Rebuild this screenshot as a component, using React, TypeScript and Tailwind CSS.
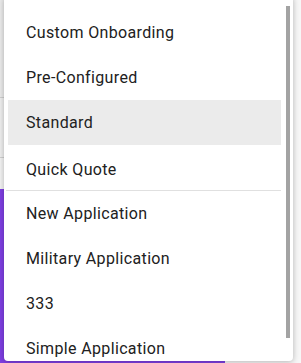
const items = [
  { label: 'Custom Onboarding' },
  { label: 'Pre-Configured' },
  { label: 'Standard', active: true },
  { label: 'Quick Quote', nudge: true },
];

const moreItems = ['New Application', 'Military Application', '333', 'Simple Application'];

function App() {
  return (
    <div className="relative h-[363px] w-[301px] overflow-hidden bg-[#f7f7f7] font-['Roboto',sans-serif]">
      {/* page behind the menu */}
      <div className="flex h-full flex-col">
        <div className="flex h-[97px]">
          <div className="w-[10px] bg-[#ececec]" />
        </div>
        <div className="flex h-[60px]">
          <div className="w-[10px] border-t border-[#d0d0d0] bg-[#f0f0f0]" />
        </div>
        <div className="flex h-[32px]">
          <div className="w-[10px] border-t border-[#d0d0d0] bg-[#f4f4f4]" />
        </div>
        <div className="flex flex-1">
          <div className="w-[225px] bg-[#7f3fe4]" />
        </div>
      </div>

      {/* dropdown menu */}
      <div className="absolute left-[4px] top-[-4px] h-[365px] w-[289px] overflow-hidden rounded-[4px] bg-white shadow-[0_1px_6px_rgba(0,0,0,0.28)]">
        <div className="pt-[14px] pl-[4px] pr-[12px]">
          {items.map((item) => (
            <div
              key={item.label}
              className={`flex h-[45px] items-center pl-[18px] text-[16px] tracking-[0.35px] text-[#212121] ${item.active ? 'bg-[#ebebeb]' : ''} ${item.nudge ? 'pt-[4px]' : ''}`}
            >
              {item.label}
            </div>
          ))}
          <div className="ml-[-2px] h-px bg-[#e0e0e0]" />
          {moreItems.map((label) => (
            <div key={label} className="flex h-[45px] items-center pl-[18px] text-[16px] tracking-[0.35px] text-[#212121]">
              {label}
            </div>
          ))}
        </div>
        {/* scrollbar thumb */}
        <div className="absolute right-[3px] top-[10px] h-[332px] w-[4px] bg-[#a3a3a3]" />
      </div>
    </div>
  );
}

export default App;
